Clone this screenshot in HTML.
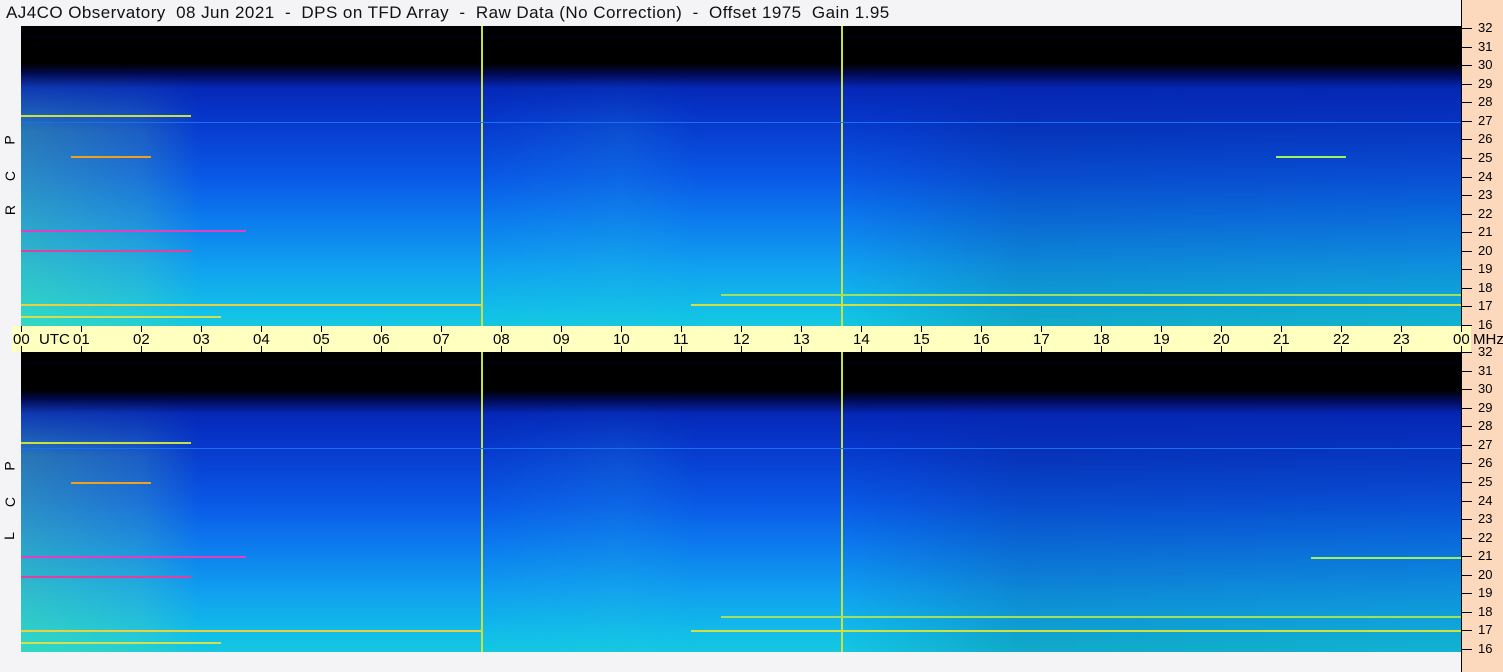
<!DOCTYPE html><html><head><style>
body{margin:0;width:1503px;height:672px;background:#f4f4f6;position:relative;overflow:hidden;font-family:"Liberation Sans",sans-serif;}
.t{position:absolute;left:6px;top:3px;font-size:17px;letter-spacing:0.45px;color:#111;white-space:pre;}
.panel{position:absolute;left:21px;width:1440px;height:300px;overflow:hidden;
background:linear-gradient(180deg,#000 0,#000 10px,#00002a 11px,#000 12px,#000 38px,#020a55 48px,#0628b8 62px,#0738cc 95px,#0a58e6 150px,#0c78ee 190px,#10a0f0 240px,#12c0e8 285px,#14c8e0 300px);}
.ov{position:absolute;left:0;top:45px;width:1440px;height:255px;
-webkit-mask-image:linear-gradient(180deg,transparent 0,#000 60px);mask-image:linear-gradient(180deg,transparent 0,#000 60px);
background:linear-gradient(90deg,rgba(120,255,120,.3) 0,rgba(120,240,140,.18) 120px,rgba(0,0,0,0) 180px,rgba(0,0,0,0) 460px,rgba(40,200,220,.12) 600px,rgba(0,0,0,0) 680px,rgba(0,0,0,0) 820px,rgba(0,0,60,.15) 1000px,rgba(0,0,60,.1) 1440px);}
.vl{position:absolute;top:0;width:2px;height:300px;background:#c8e040;}
.hl{position:absolute;height:2px;}
.axis{position:absolute;left:12px;top:326px;width:1459px;height:26px;background:#ffffc0;}
.axis span{position:absolute;top:5px;font-size:15px;color:#000;}
.axis i{position:absolute;width:1px;height:6px;background:#000;}
.right{position:absolute;left:1461px;top:0;width:42px;height:672px;background:#fcd8bc;border-left:1px solid #000;}
.r{position:absolute;left:1478px;font-size:13px;color:#000;}
.rt{position:absolute;left:1462px;width:10px;height:1px;background:#000;}
.lab{position:absolute;left:5px;font-size:14px;color:#000;transform:rotate(-90deg);}
</style></head><body>
<div class="t">AJ4CO Observatory  08 Jun 2021  -  DPS on TFD Array  -  Raw Data (No Correction)  -  Offset 1975  Gain 1.95</div>
<div class="right"></div>

<div class="panel" style="top:26px"><div class="ov"></div>
<div class="vl" style="left:460px"></div><div class="vl" style="left:820px"></div>
<div class="hl" style="top:89px;left:0;width:170px;background:#c8e040"></div>
<div class="hl" style="top:96px;left:0;width:1440px;height:1px;background:#1a70f0"></div>
<div class="hl" style="top:130px;left:50px;width:80px;background:#f0a020"></div>
<div class="hl" style="top:204px;left:0;width:225px;background:#e040c0"></div>
<div class="hl" style="top:224px;left:0;width:170px;background:#e040a0"></div>
<div class="hl" style="top:278px;left:0;width:460px;background:#e8d040"></div>
<div class="hl" style="top:278px;left:670px;width:770px;background:#d0e040"></div>
<div class="hl" style="top:268px;left:700px;width:750px;background:#a0e060"></div>
<div class="hl" style="top:290px;left:0;width:200px;background:#d0e050"></div>
<div class="hl" style="top:130px;left:1255px;width:70px;background:#a0f060"></div>
</div>

<div class="panel" style="top:352px"><div class="ov"></div>
<div class="vl" style="left:460px"></div><div class="vl" style="left:820px"></div>
<div class="hl" style="top:90px;left:0;width:170px;background:#c8e040"></div>
<div class="hl" style="top:96px;left:0;width:1440px;height:1px;background:#1a70f0"></div>
<div class="hl" style="top:130px;left:50px;width:80px;background:#f0a020"></div>
<div class="hl" style="top:204px;left:0;width:225px;background:#e040c0"></div>
<div class="hl" style="top:224px;left:0;width:170px;background:#e040a0"></div>
<div class="hl" style="top:278px;left:0;width:460px;background:#e8d040"></div>
<div class="hl" style="top:278px;left:670px;width:770px;background:#d0e040"></div>
<div class="hl" style="top:264px;left:700px;width:750px;background:#a0e060"></div>
<div class="hl" style="top:290px;left:0;width:200px;background:#d0e050"></div>
<div class="hl" style="top:205px;left:1290px;width:150px;background:#a0f060"></div>
</div>

<div class="axis" id="ax"></div>
<div class="lab" style="top:132px">P</div><div class="lab" style="top:168px">C</div><div class="lab" style="top:202px">R</div>
<div class="lab" style="top:458px">P</div><div class="lab" style="top:494px">C</div><div class="lab" style="top:528px">L</div>
<div id="rl"></div>
<script>
(function(){
var ax=document.getElementById('ax'),h='';
for(var i=0;i<=24;i++){var x=9+i*60;var l=i==24?'00':(i<10?'0'+i:''+i);
h+='<i style="left:'+x+'px;top:0"></i><i style="left:'+x+'px;top:20px"></i>';
h+='<span style="left:'+(x-8)+'px">'+l+'</span>';}
h+='<span style="left:27px">UTC</span><span style="left:1461px">MHz</span>';
ax.innerHTML=h;
var r='';
for(var p=0;p<2;p++){var y0=p?352:28,y1=p?649:325;
for(var m=16;m<=32;m++){var y=y1-(m-16)*(y1-y0)/16;
r+='<div class="rt" style="top:'+Math.round(y)+'px"></div><div class="r" style="top:'+Math.round(y-8)+'px">'+m+'</div>';}}
document.getElementById('rl').innerHTML=r;
})();
</script>
</body></html>
